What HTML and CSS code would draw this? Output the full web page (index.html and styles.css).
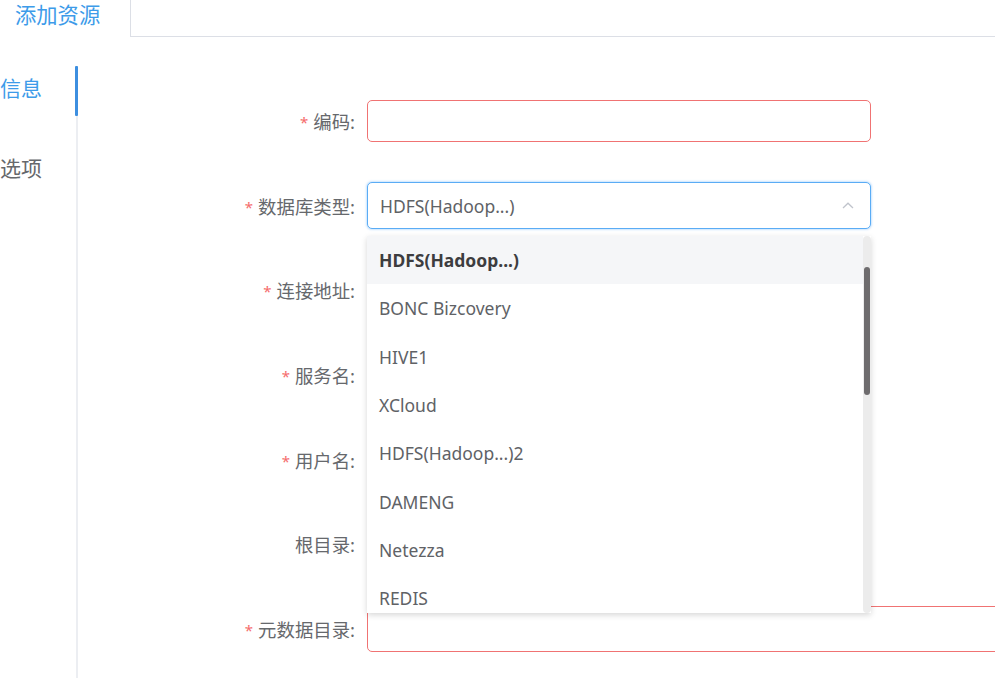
FILE: index.html
```html
<!DOCTYPE html>
<html lang="zh">
<head>
<meta charset="utf-8">
<title>添加资源</title>
<link rel="stylesheet" href="styles.css">
</head>
<body>
<div class="page">
  <header class="tabs">
    <div class="tab active">添加资源</div>
    <div class="tab-rest"></div>
  </header>
  <div class="main">
    <nav class="side">
      <div class="side-item current">信息</div>
      <div class="side-item">选项</div>
    </nav>
    <form class="form">
      <div class="row">
        <label class="label"><span class="star">*</span>编码:</label>
        <div class="field"><div class="input error h42"></div></div>
      </div>
      <div class="row">
        <label class="label"><span class="star">*</span>数据库类型:</label>
        <div class="field select-wrap">
          <div class="input focus h47">
            <span class="value">HDFS(Hadoop...)</span>
            <svg class="chev" width="12" height="7" viewBox="0 0 12 7"><path d="M1 6 L6 1.2 L11 6" fill="none" stroke="#c0c4cc" stroke-width="1.3"/></svg>
          </div>
          <div class="dropdown">
            <ul class="options">
              <li class="opt selected">HDFS(Hadoop...)</li>
              <li class="opt">BONC Bizcovery</li>
              <li class="opt">HIVE1</li>
              <li class="opt">XCloud</li>
              <li class="opt">HDFS(Hadoop...)2</li>
              <li class="opt">DAMENG</li>
              <li class="opt">Netezza</li>
              <li class="opt">REDIS</li>
            </ul>
            <div class="scrollbar"><div class="thumb"></div></div>
          </div>
        </div>
      </div>
      <div class="row">
        <label class="label"><span class="star">*</span>连接地址:</label>
        <div class="field"><div class="input h42"></div></div>
      </div>
      <div class="row">
        <label class="label"><span class="star">*</span>服务名:</label>
        <div class="field"><div class="input h42"></div></div>
      </div>
      <div class="row">
        <label class="label"><span class="star">*</span>用户名:</label>
        <div class="field"><div class="input h42"></div></div>
      </div>
      <div class="row">
        <label class="label">根目录:</label>
        <div class="field"><div class="input h42"></div></div>
      </div>
      <div class="row">
        <label class="label"><span class="star">*</span>元数据目录:</label>
        <div class="field wide"><div class="input error h46"></div></div>
      </div>
    </form>
  </div>
</div>
</body>
</html>
```
FILE: styles.css
```css
html, body {
  margin: 0;
  padding: 0;
  background: #fff;
  overflow: hidden;
  width: 995px;
  height: 678px;
}
body {
  font-family: "Noto Sans", "Noto Sans CJK SC", sans-serif;
  color: #606266;
}
.page {
  width: 995px;
  height: 678px;
  overflow: hidden;
}
.tabs {
  display: flex;
  height: 37px;
}
.tab {
  flex: 0 0 115px;
  padding-left: 15px;
  font-size: 21.3px;
  line-height: 30px;
  color: #3d9be9;
  white-space: nowrap;
}
.tab-rest {
  flex: 1;
  border-left: 1px solid #dcdfe6;
  border-bottom: 1px solid #dcdfe6;
}
.main {
  display: flex;
  height: 641px;
}
.side {
  flex: 0 0 76px;
  margin-top: 29px;
  border-right: 2px solid #eceef2;
  display: flex;
  flex-direction: column;
  gap: 30px;
}
.side-item {
  position: relative;
  height: 50px;
  line-height: 44px;
  font-size: 21px;
  text-align: right;
  padding-right: 34px;
  color: #66686c;
  white-space: nowrap;
}
.side-item.current {
  color: #3d9be9;
}
.side-item.current::after {
  content: "";
  position: absolute;
  right: -2px;
  top: 0;
  width: 3px;
  height: 50px;
  background: #3d8fe0;
  border-radius: 1px;
}
.form {
  margin: 0;
  padding-top: 41.7px;
  display: flex;
  flex-direction: column;
  flex: 0 0 auto;
}
.row {
  display: flex;
  align-items: center;
  height: 84.67px;
}
.label {
  flex: 0 0 277px;
  padding-right: 12px;
  text-align: right;
  font-size: 18.4px;
  color: #66686c;
  white-space: nowrap;
}
.star {
  color: #f56c6c;
  margin-right: 5px;
  font-size: 15px;
  position: relative;
  top: -1px;
}
.field {
  flex: 0 0 504px;
}
.field.wide {
  flex: 0 0 700px;
}
.select-wrap {
  position: relative;
}
.input {
  box-sizing: border-box;
  border: 1px solid #dcdfe6;
  border-radius: 5px;
  background: #fff;
  display: flex;
  align-items: center;
  padding: 0 12px;
}
.input.error {
  border: 1.5px solid #f07373;
}
.input.focus {
  border: 1.5px solid #5aacf5;
  box-shadow: 0 0 2px 1px rgba(100, 175, 250, 0.35);
}
.h42 { height: 42px; }
.h46 { height: 46px; }
.h47 { height: 47px; }
.value {
  flex: 1;
  font-size: 17.5px;
  color: #606266;
}
.chev {
  margin-right: 4px;
}
.dropdown {
  position: absolute;
  left: 0;
  top: calc(100% + 7px);
  width: 504px;
  height: 377px;
  background: #fff;
  box-shadow: 0 2px 6px rgba(0, 0, 0, 0.16);
  display: flex;
  z-index: 10;
  overflow: hidden;
}
.options {
  list-style: none;
  margin: 0;
  padding: 0;
  flex: 1;
}
.opt {
  height: 48.3px;
  line-height: 48.3px;
  padding-left: 12px;
  font-size: 17.5px;
  color: #606266;
  white-space: nowrap;
}
.opt.selected {
  background: #f5f6f8;
  color: #3d3d3f;
  font-weight: 700;
}
.scrollbar {
  width: 8px;
  background: #ececec;
  position: relative;
  border-radius: 4px;
}
.thumb {
  position: absolute;
  left: 1px;
  top: 31px;
  width: 6px;
  height: 128px;
  border-radius: 3px;
  background: #6e6c6e;
}
```
